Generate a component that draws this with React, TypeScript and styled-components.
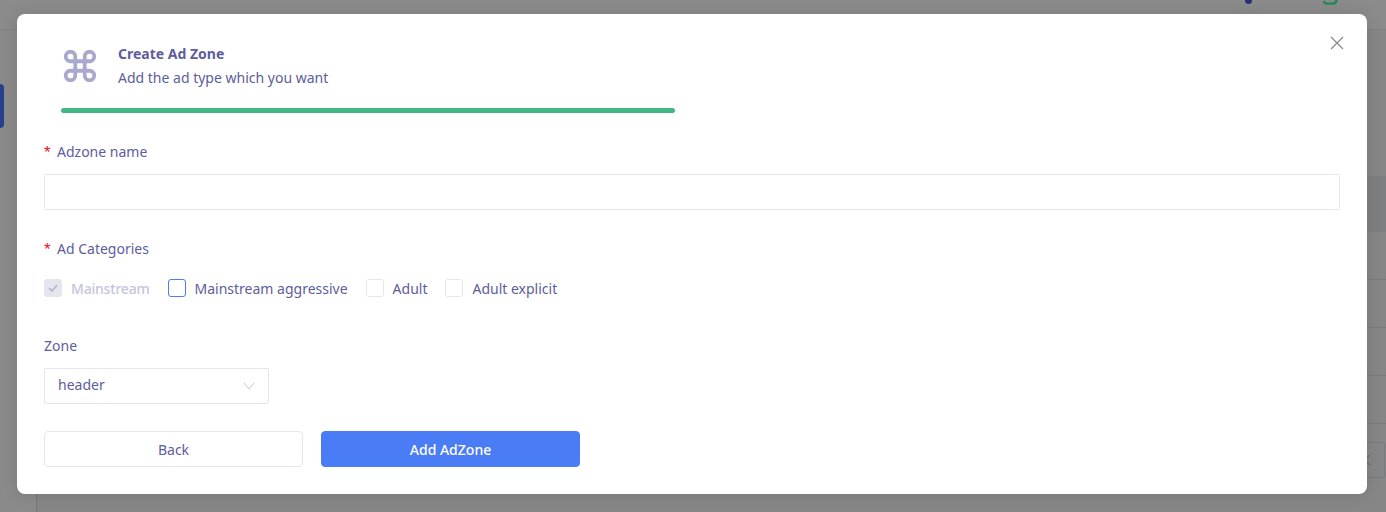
import React from "react";
import styled, { createGlobalStyle } from "styled-components";

const GlobalStyle = createGlobalStyle`
  html, body {
    margin: 0;
    padding: 0;
    height: 100%;
    overflow: hidden;
    font-family: "Noto Sans", "Open Sans", sans-serif;
  }
  #root {
    height: 100%;
  }
`;

const Page = styled.div`
  position: relative;
  display: flex;
  flex-direction: column;
  width: 1386px;
  height: 512px;
  background-color: #868686;
  overflow: hidden;
`;

const TopBar = styled.header`
  display: flex;
  justify-content: flex-end;
  align-items: flex-start;
  gap: 71px;
  height: 30px;
  padding-right: 48px;
  box-sizing: border-box;
  border-bottom: 1px solid #818181;
  background-color: #8b8b8b;
`;

const TopDot = styled.span`
  width: 7px;
  height: 4px;
  border-radius: 0 0 4px 4px;
  background-color: #2b2f78;
`;

const Body = styled.div`
  flex: 1;
  display: flex;
`;

const Rail = styled.aside`
  position: relative;
  width: 36px;
  border-right: 1px solid #767676;
  background-color: #8a8a8b;
`;

const RailTab = styled.span`
  position: absolute;
  top: 54px;
  left: 0;
  width: 4px;
  height: 44px;
  border-radius: 0 4px 4px 0;
  background-color: #26408c;
`;

const TableArea = styled.div`
  flex: 1;
  display: flex;
  flex-direction: column;
  padding-top: 146px;
`;

const TableHead = styled.div`
  height: 56px;
  background-color: #7e7f80;
`;

const TableRow = styled.div`
  height: 48px;
  border-bottom: 1px solid #7b7b7b;
  box-sizing: border-box;
`;

const Pager = styled.div`
  align-self: flex-end;
  display: flex;
  align-items: center;
  justify-content: center;
  box-sizing: border-box;
  width: 36px;
  height: 36px;
  margin: 18px 1px 0 0;
  border: 1px solid #7a7a82;
  border-radius: 2px;
`;

const Overlay = styled.div`
  position: absolute;
  top: 14px;
  left: 17px;
  width: 1350px;
  height: 480px;
  box-sizing: border-box;
  padding: 0 27px;
  background-color: #ffffff;
  border-radius: 8px;
  box-shadow: 0 0 16px rgba(0, 0, 0, 0.12);
  display: flex;
  flex-direction: column;
  color: #5d5d9c;
  font-size: 14px;
`;

const CloseButton = styled.button`
  position: absolute;
  top: 21px;
  right: 22px;
  width: 16px;
  height: 16px;
  padding: 0;
  border: none;
  background: none;
  display: flex;
  color: #8a8a8a;
`;

const Heading = styled.div`
  display: flex;
  align-items: center;
  gap: 19px;
  height: 64px;
  padding: 20px 0 0 17px;
`;

const TitleBlock = styled.div`
  display: flex;
  flex-direction: column;
  gap: 5px;
  margin-bottom: 2px;
`;

const Title = styled.div`
  font-weight: 700;
  font-size: 14px;
  line-height: 19px;
`;

const Subtitle = styled.div`
  font-size: 14px;
  line-height: 19px;
`;

const Progress = styled.div`
  width: 614px;
  height: 5px;
  margin: 10px 0 0 17px;
  border-radius: 3px;
  background-color: #41b883;
`;

const FieldLabel = styled.label<{ $required?: boolean; $top: number }>`
  display: flex;
  align-items: center;
  height: 20px;
  margin-top: ${(p) => p.$top}px;
  font-size: 14px;

  ${(p) =>
    p.$required &&
    `&::before {
      content: "*";
      width: 13px;
      color: #e8112d;
      font-family: "Liberation Sans", sans-serif;
      font-size: 17px;
      line-height: 20px;
      padding-top: 3px;
    }`}
`;

const NameInput = styled.input`
  display: block;
  box-sizing: border-box;
  width: 1296px;
  height: 36px;
  margin-top: 13px;
  border: 1px solid #e3e6ef;
  border-radius: 2px;
  outline: none;
`;

const CheckRow = styled.div`
  display: flex;
  align-items: center;
  gap: 18px;
  margin-top: 20px;
  height: 20px;
`;

const CheckItem = styled.label<{ $disabled?: boolean }>`
  display: flex;
  align-items: center;
  gap: 9px;
  color: ${(p) => (p.$disabled ? "#c5c5dc" : "#5d5d9c")};
  font-weight: ${(p) => (p.$disabled ? 500 : 400)};
  letter-spacing: ${(p) => (p.$disabled ? "-0.2px" : "0")};
`;

const Box = styled.span<{ $focused?: boolean; $disabled?: boolean }>`
  display: flex;
  align-items: center;
  justify-content: center;
  box-sizing: border-box;
  width: 18px;
  height: 18px;
  border-radius: 3px;
  border: 1px solid ${(p) => (p.$focused ? "#4a7cf6" : "#e3e6ef")};
  background-color: ${(p) => (p.$disabled ? "#e3e6ef" : "#ffffff")};
`;

const SelectBox = styled.div`
  display: flex;
  align-items: center;
  justify-content: space-between;
  box-sizing: border-box;
  width: 225px;
  height: 36px;
  margin-top: 13px;
  padding: 0 13px;
  border: 1px solid #e3e6ef;
  border-radius: 2px;
`;

const SelectValue = styled.span`
  margin-bottom: 3px;
`;

const Actions = styled.div`
  display: flex;
  gap: 18px;
  margin-top: 27px;
`;

const ActionButton = styled.button<{ $primary?: boolean }>`
  width: 259px;
  height: 36px;
  border-radius: 4px;
  border: 1px solid ${(p) => (p.$primary ? "#4a7cf6" : "#e3e6ef")};
  background-color: ${(p) => (p.$primary ? "#4a7cf6" : "#ffffff")};
  color: ${(p) => (p.$primary ? "#ffffff" : "#5d5d9c")};
  font-family: inherit;
  font-size: 14px;
  font-weight: ${(p) => (p.$primary ? 500 : 400)};
`;

const categories = [
  { label: "Mainstream", disabled: true },
  { label: "Mainstream aggressive", focused: true },
  { label: "Adult" },
  { label: "Adult explicit" },
];

export default function App() {
  return (
    <Page>
      <GlobalStyle />
      <TopBar>
        <TopDot />
        <svg width="15" height="5" viewBox="0 0 15 5" fill="none" stroke="#1f8a5a" strokeWidth="2.4">
          <path d="M1.2 1q0 2.6 2.6 2.6h6q3.6 0 3.6-3.6" />
        </svg>
      </TopBar>
      <Body>
        <Rail>
          <RailTab />
        </Rail>
        <TableArea>
          <TableHead />
          <TableRow />
          <TableRow />
          <TableRow />
          <TableRow />
          <Pager>
            <svg width="10" height="12" viewBox="0 0 10 12" fill="none" stroke="#6c6c76" strokeWidth="1.3">
              <path d="M8 1L2 6l6 5" />
            </svg>
          </Pager>
        </TableArea>
      </Body>
      <Overlay>
        <CloseButton aria-label="Close">
          <svg width="16" height="16" viewBox="0 0 16 16" fill="none" stroke="currentColor" strokeWidth="1.3">
            <path d="M2 2l12 12M14 2L2 14" />
          </svg>
        </CloseButton>
        <Heading>
          <svg width="38" height="38" viewBox="0 0 24 24" fill="none" stroke="#a9a9cd" strokeWidth="2.4">
            <path d="M15 6v12a3 3 0 1 0 3-3H6a3 3 0 1 0 3 3V6a3 3 0 1 0-3 3h12a3 3 0 1 0-3-3" />
          </svg>
          <TitleBlock>
            <Title>Create Ad Zone</Title>
            <Subtitle>Add the ad type which you want</Subtitle>
          </TitleBlock>
        </Heading>
        <Progress />
        <FieldLabel $required $top={28}>Adzone name</FieldLabel>
        <NameInput />
        <FieldLabel $required $top={28}>Ad Categories</FieldLabel>
        <CheckRow>
          {categories.map((c) => (
            <CheckItem key={c.label} $disabled={c.disabled}>
              <Box $focused={c.focused} $disabled={c.disabled}>
                {c.disabled && (
                  <svg width="12" height="12" viewBox="0 0 12 12" fill="none" stroke="#b9b9c9" strokeWidth="1.8">
                    <path d="M2 6.2l2.8 2.8L10 3.2" />
                  </svg>
                )}
              </Box>
              {c.label}
            </CheckItem>
          ))}
        </CheckRow>
        <FieldLabel $top={37}>Zone</FieldLabel>
        <SelectBox>
          <SelectValue>header</SelectValue>
          <svg width="12" height="8" viewBox="0 0 12 8" fill="none" stroke="#c5c5dc" strokeWidth="1">
            <path d="M1 1l5 6 5-6" />
          </svg>
        </SelectBox>
        <Actions>
          <ActionButton>Back</ActionButton>
          <ActionButton $primary>Add AdZone</ActionButton>
        </Actions>
      </Overlay>
    </Page>
  );
}
